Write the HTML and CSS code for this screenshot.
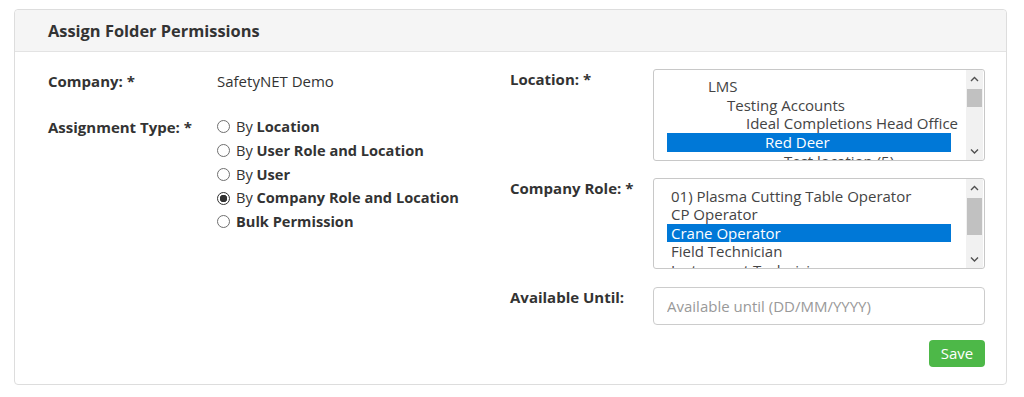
FILE: index.html
```html
<!DOCTYPE html>
<html lang="en">
<head>
<meta charset="utf-8">
<title>Assign Folder Permissions</title>
<link rel="stylesheet" href="styles.css">
</head>
<body>
<div class="panel">
  <div class="panel-head">Assign Folder Permissions</div>
  <div class="panel-body">
    <div class="col col-left">
      <div class="frow">
        <div class="lbl">Company: *</div>
        <div class="val">SafetyNET Demo</div>
      </div>
      <div class="frow">
        <div class="lbl">Assignment Type: *</div>
        <div class="radios">
          <label class="radio"><input type="radio" name="atype"><span>By <b>Location</b></span></label>
          <label class="radio"><input type="radio" name="atype"><span>By <b>User Role and Location</b></span></label>
          <label class="radio"><input type="radio" name="atype"><span>By <b>User</b></span></label>
          <label class="radio"><input type="radio" name="atype" checked><span>By <b>Company Role and Location</b></span></label>
          <label class="radio"><input type="radio" name="atype"><span><b>Bulk Permission</b></span></label>
        </div>
      </div>
    </div>
    <div class="col col-right">
      <div class="rrow rrow-loc">
        <div class="lbl2">Location: *</div>
        <div class="listbox">
          <div class="options">
            <div class="opt d1">LMS</div>
            <div class="opt d2">Testing Accounts</div>
            <div class="opt d3">Ideal Completions Head Office</div>
            <div class="opt d4 sel">Red Deer</div>
            <div class="opt d5">Test location (5)</div>
          </div>
          <div class="sbar">
            <div class="sb-btn"><svg width="17" height="17" viewBox="0 0 17 17"><polyline points="5,11 8.5,7.5 12,11" fill="none" stroke="#505050" stroke-width="1.4"/></svg></div>
            <div class="sb-track"><div class="thumb thumb-loc"></div></div>
            <div class="sb-btn"><svg width="17" height="17" viewBox="0 0 17 17"><polyline points="5,6.5 8.5,10 12,6.5" fill="none" stroke="#505050" stroke-width="1.4"/></svg></div>
          </div>
        </div>
      </div>
      <div class="rrow rrow-role">
        <div class="lbl2">Company Role: *</div>
        <div class="listbox listbox-role">
          <div class="options options-role">
            <div class="opt">01) Plasma Cutting Table Operator</div>
            <div class="opt">CP Operator</div>
            <div class="opt sel">Crane Operator</div>
            <div class="opt">Field Technician</div>
            <div class="opt">Instrument Technician</div>
          </div>
          <div class="sbar">
            <div class="sb-btn"><svg width="17" height="17" viewBox="0 0 17 17"><polyline points="5,11 8.5,7.5 12,11" fill="none" stroke="#505050" stroke-width="1.4"/></svg></div>
            <div class="sb-track"><div class="thumb thumb-role"></div></div>
            <div class="sb-btn"><svg width="17" height="17" viewBox="0 0 17 17"><polyline points="5,6.5 8.5,10 12,6.5" fill="none" stroke="#505050" stroke-width="1.4"/></svg></div>
          </div>
        </div>
      </div>
      <div class="rrow rrow-date">
        <div class="lbl2">Available Until:</div>
        <input class="date-input" type="text" placeholder="Available until (DD/MM/YYYY)">
      </div>
      <div class="actions">
        <button class="btn-save" type="button">Save</button>
      </div>
    </div>
  </div>
</div>
</body>
</html>
```

FILE: styles.css
```css
* { box-sizing: border-box; }

html, body {
  margin: 0;
  padding: 0;
  background: #ffffff;
}

body {
  font-family: "Open Sans", "Noto Sans", sans-serif;
  font-size: 15px;
  color: #333333;
  padding: 9px 17px 0 14px;
}

.panel {
  border: 1px solid #dddddd;
  border-radius: 4px;
  background: #ffffff;
}

.panel-head {
  height: 42px;
  background: #f5f5f5;
  border-bottom: 1px solid #e3e3e3;
  border-radius: 4px 4px 0 0;
  padding-left: 33px;
  font-size: 16.4px;
  font-weight: 700;
  line-height: 41px;
  color: #333333;
}

.panel-body {
  display: flex;
  padding: 17px 21px 17px 33px;
}

.col-left {
  width: 462px;
  flex: none;
}

.col-right {
  flex: 1;
  display: flex;
  flex-direction: column;
}

.frow {
  display: flex;
  line-height: 24px;
  margin-bottom: 22px;
}

.lbl {
  width: 169px;
  flex: none;
  font-weight: 700;
}

.val {
  color: #333333;
}

.radios {
  display: flex;
  flex-direction: column;
  font-size: 14.6px;
}

.radio {
  display: flex;
  align-items: center;
  height: 23.75px;
  line-height: 23.75px;
  cursor: pointer;
}

.radio b { font-weight: 700; }

.radio input {
  appearance: none;
  -webkit-appearance: none;
  margin: 0 6px 0 0;
  width: 13px;
  height: 13px;
  border: 1px solid #6f6f6f;
  border-radius: 50%;
  background: #ffffff;
  flex: none;
}

.radio input:checked {
  border-color: #333333;
  background: radial-gradient(circle, #333333 0, #333333 3.5px, #ffffff 4px);
}

.rrow {
  display: flex;
  align-items: flex-start;
}

.rrow-loc { margin-bottom: 17px; }
.rrow-role { margin-bottom: 18px; }
.rrow-date { margin-bottom: 15px; }

.lbl2 {
  width: 143px;
  flex: none;
  font-weight: 700;
  line-height: 20px;
}

.listbox {
  width: 332px;
  height: 92px;
  border: 1px solid #c8c8c8;
  border-radius: 3px;
  display: flex;
  overflow: hidden;
  background: #ffffff;
}

.listbox-role { height: 91px; }

.options {
  width: 284px;
  margin-left: 13px;
  margin-right: 15px;
  padding-top: 7px;
  flex: none;
}

.options-role { padding-top: 7.5px; }

.opt {
  height: 18.67px;
  line-height: 18.67px;
  padding-left: 4px;
  white-space: nowrap;
  color: #444444;
}

.opt.sel {
  background: #0078d7;
  color: #ffffff;
}

.d1 { padding-left: 41px; }
.d2 { padding-left: 60px; }
.d3 { padding-left: 79px; }
.d4 { padding-left: 98px; }
.d5 { padding-left: 117px; }

.sbar {
  width: 17px;
  flex: none;
  background: #f1f1f1;
  display: flex;
  flex-direction: column;
}

.sb-btn {
  height: 17px;
  flex: none;
}

.sb-btn svg { display: block; }

.sb-track {
  flex: 1;
  padding-top: 2px;
}

.thumb {
  background: #c1c1c1;
  margin: 0 1px;
}

.thumb-loc { height: 18px; }
.thumb-role { height: 37px; }

.date-input {
  width: 332px;
  height: 38px;
  border: 1px solid #cccccc;
  border-radius: 4px;
  padding: 0 13px;
  font-family: inherit;
  font-size: 15px;
  color: #555555;
  outline: none;
}

.date-input::placeholder {
  color: #999999;
}

.actions {
  display: flex;
  justify-content: flex-end;
}

.btn-save {
  width: 56px;
  height: 27px;
  border: none;
  border-radius: 4px;
  background: #4db848;
  color: #ffffff;
  font-family: inherit;
  font-size: 15px;
  padding: 0;
  line-height: 27px;
  cursor: pointer;
}
```
